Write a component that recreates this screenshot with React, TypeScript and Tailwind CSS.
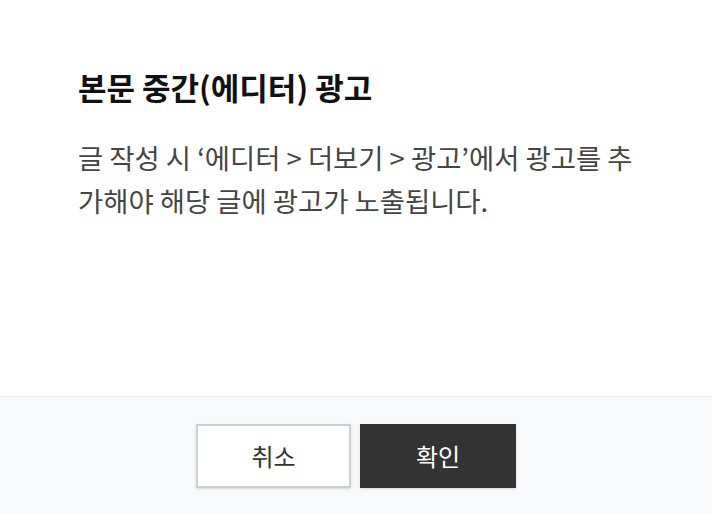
export default function App() {
  return (
    <div
      className="w-[712px] h-[514px] bg-white flex flex-col overflow-hidden"
      style={{ fontFamily: '"Noto Sans CJK KR", "Noto Sans", sans-serif' }}
    >
      <div className="h-[396px] px-[78px] pt-[66px] shrink-0">
        <h2 className="text-[31px] leading-[42px] font-bold text-[#111]">
          본문 중간(에디터) 광고
        </h2>
        <p className="mt-[28px] text-[27.4px] leading-[43px] text-[#454545]">
          글 작성 시 ‘에디터 &gt; 더보기 &gt; 광고’에서 광고를 추가해야 해당 글에 광고가 노출됩니다.
        </p>
      </div>
      <div className="flex-1 bg-[#f8f9fb] border-t border-[#eef0f3] flex justify-center pt-[27px] gap-[9px]">
        <button className="w-[155px] h-[64px] bg-white border-2 border-[#cbd1da] text-[24px] text-[#333] shadow-sm">
          취소
        </button>
        <button className="w-[156px] h-[64px] bg-[#333] text-[24px] text-white shadow-sm">
          확인
        </button>
      </div>
    </div>
  );
}
